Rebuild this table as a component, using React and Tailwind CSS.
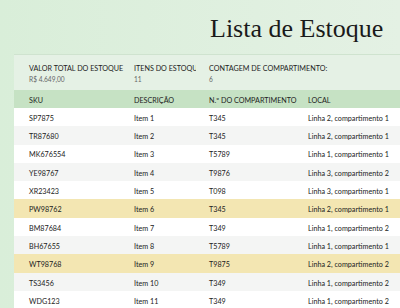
import React from "react";

const rows = [
  { sku: "SP7875", desc: "Item 1", bin: "T345", local: "Linha 2, compartimento 1" },
  { sku: "TR87680", desc: "Item 2", bin: "T345", local: "Linha 2, compartimento 1" },
  { sku: "MK676554", desc: "Item 3", bin: "T5789", local: "Linha 1, compartimento 1" },
  { sku: "YE98767", desc: "Item 4", bin: "T9876", local: "Linha 3, compartimento 2" },
  { sku: "XR23423", desc: "Item 5", bin: "T098", local: "Linha 3, compartimento 1" },
  { sku: "PW98762", desc: "Item 6", bin: "T345", local: "Linha 2, compartimento 1", flag: true },
  { sku: "BM87684", desc: "Item 7", bin: "T349", local: "Linha 1, compartimento 2" },
  { sku: "BH67655", desc: "Item 8", bin: "T5789", local: "Linha 1, compartimento 1" },
  { sku: "WT98768", desc: "Item 9", bin: "T9875", local: "Linha 2, compartimento 2", flag: true },
  { sku: "TS3456", desc: "Item 10", bin: "T349", local: "Linha 1, compartimento 2" },
  { sku: "WDG123", desc: "Item 11", bin: "T349", local: "Linha 1, compartimento 2" },
];

const cols = "grid grid-cols-[105px_75px_99px_1fr] pl-[15px] items-center";

export default function App() {
  return (
    <div className="w-[400px] h-[308px] overflow-hidden bg-gradient-to-r from-[#d9eed9] to-[#e4f1e4] pl-[14px] text-[#222] text-[7.2px] leading-[1.2]" style={{ fontFamily: "Lato, 'Open Sans', sans-serif" }}>
      <div className="flex flex-col">
        {/* titulo */}
        <div className="h-[55px] flex items-end pl-[196px] pb-[12px] border-b border-[#cfe3cf]">
          <h1 className="text-[26px] leading-none text-[#1a1a1a] whitespace-nowrap" style={{ fontFamily: "'Liberation Serif', 'DejaVu Serif', serif" }}>
            Lista de Estoque
          </h1>
        </div>

        {/* resumo */}
        <div className={`${cols} h-[35px] bg-[#e5f1e5] items-start pt-[10px]`}>
          <div className="flex flex-col gap-[2px]">
            <span className="uppercase whitespace-nowrap">VALOR TOTAL DO ESTOQUE</span>
            <span className="text-[#666] text-[6.6px]">R$ 4.649,00</span>
          </div>
          <div className="flex flex-col gap-[2px] overflow-hidden pr-[13px]">
            <span className="uppercase whitespace-nowrap overflow-hidden">ITENS DO ESTOQUE</span>
            <span className="text-[#666] text-[6.6px]">11</span>
          </div>
          <div className="flex flex-col gap-[2px] col-span-2">
            <span className="uppercase whitespace-nowrap">CONTAGEM DE COMPARTIMENTO:</span>
            <span className="text-[#666] text-[6.6px]">6</span>
          </div>
        </div>

        {/* cabecalho da tabela */}
        <div className={`${cols} h-[18px] pt-[4px] bg-[#c6e2c4] uppercase`}>
          <span>SKU</span>
          <span>DESCRIÇÃO</span>
          <span className="whitespace-nowrap">N.º DO COMPARTIMENTO</span>
          <span>LOCAL</span>
        </div>

        {rows.map((r, i) => (
          <div
            key={r.sku}
            className={`${cols} h-[18.3px] pt-[4px] ${r.flag ? "bg-[#f3e6b2]" : i % 2 === 0 ? "bg-white" : "bg-[#f4f5f4]"}`}
          >
            <span>{r.sku}</span>
            <span>{r.desc}</span>
            <span>{r.bin}</span>
            <span className="whitespace-nowrap">{r.local}</span>
          </div>
        ))}
      </div>
    </div>
  );
}
